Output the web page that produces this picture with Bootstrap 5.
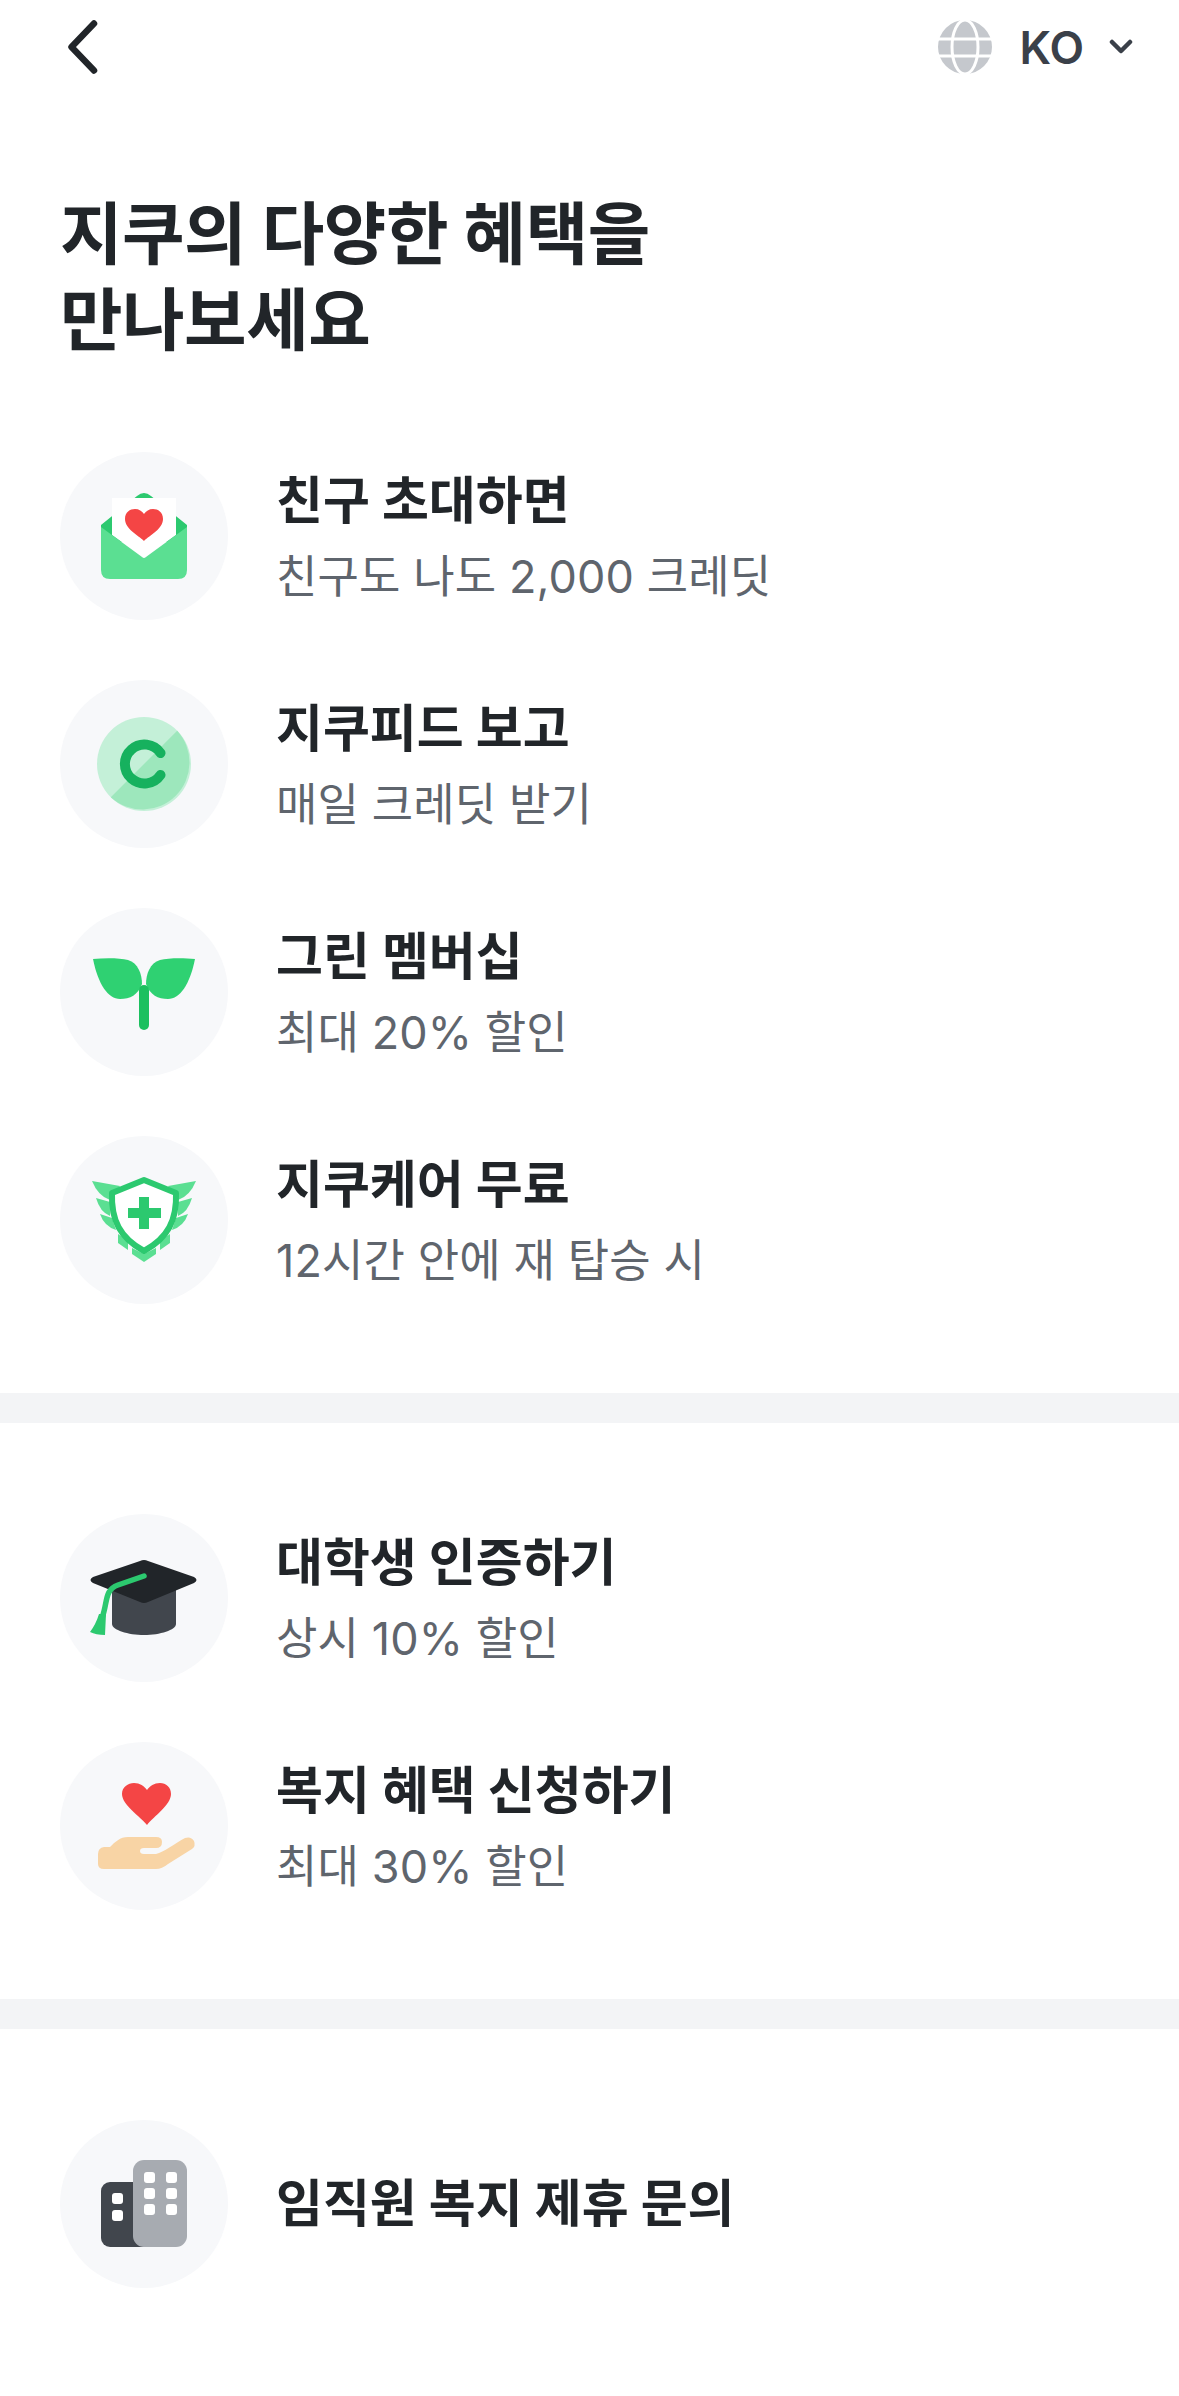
<!DOCTYPE html>
<html lang="ko">
<head>
<meta charset="utf-8">
<title>지쿠 혜택</title>
<link href="https://cdn.jsdelivr.net/npm/bootstrap@5.3.0/dist/css/bootstrap.min.css" rel="stylesheet">
<style>
body { font-family: Inter, "Noto Sans CJK KR", sans-serif; background: #fff; color: #212529; width: 1179px; height: 2396px; overflow: hidden; }
.top-bar { height: 94px; padding: 0 46px 0 67px; }
.back-ico { width: 32px; height: 54px; }
.globe-ico { width: 54px; height: 54px; margin-right: 27px; }
.lang-text { font-size: 45px; font-weight: 600; color: #3a4049; line-height: 1; letter-spacing: 0; }
.lang-caret { width: 24px; height: 16px; margin-left: 25px; }
.page-title { font-size: 68px; font-weight: 700; line-height: 86px; letter-spacing: -.5px; margin: 97px 0 0; padding: 0 60px 89px; }
.perk-list { display: flex; flex-direction: column; gap: 60px; padding: 0 60px 89px; }
.perk-list.next-list { padding-top: 91px; }
.perk-item { display: flex; align-items: center; gap: 48px; height: 168px; }
.perk-disc { width: 168px; height: 168px; flex: none; border-radius: 50%; background: #f7f8fa; }
.perk-disc svg { display: block; width: 168px; height: 168px; }
.perk-name { font-size: 51px; font-weight: 700; line-height: 72px; letter-spacing: 0; color: #212529; margin: 0; }
.perk-note { font-size: 45px; font-weight: 400; line-height: 60px; color: #5f656d; margin: 10px 0 0; letter-spacing: .1px; }
.band { height: 30px; background: #f3f4f6; }
</style>
</head>
<body>
<header class="top-bar d-flex align-items-center justify-content-between">
  <svg class="back-ico" viewBox="0 0 32 54" fill="none" stroke="#212529" stroke-width="6.5" stroke-linecap="round" stroke-linejoin="round"><path d="M27 3.500 L4.500 27 L27 50.500"/></svg>
  <div class="d-flex align-items-center">
    <svg class="globe-ico" viewBox="0 0 54 54"><circle cx="27" cy="27" r="27" fill="#c5c8cd"/><g fill="none" stroke="#fff" stroke-width="3"><ellipse cx="27" cy="27" rx="13" ry="27"/><path d="M0 19H54M0 36H54"/></g></svg>
    <span class="lang-text">KO</span>
    <svg class="lang-caret" viewBox="0 0 24 16" fill="none" stroke="#3a4049" stroke-width="4.5" stroke-linecap="round" stroke-linejoin="round"><path d="M3 3 L12 12 L21 3"/></svg>
  </div>
</header>
<h1 class="page-title">지쿠의 다양한 혜택을<br>만나보세요</h1>

<section class="perk-list">
  <div class="perk-item">
    <div class="perk-disc"><svg viewBox="0 0 168 168">
      <path d="M41 73 L77 44 Q84 38 91 44 L127 73 V90 H41Z" fill="#2cc96f"/>
      <path d="M52 46 H116 V83 L84 106 L52 83Z" fill="#fff"/>
      <path d="M84 89 C78 83 65 77 65 67 C65 60 70 57 75 57 C79 57 82 59 84 62 C86 59 89 57 93 57 C98 57 103 60 103 67 C103 77 90 83 84 89Z" fill="#f44545"/>
      <path d="M41 75 L82 105 Q84 107 86 105 L127 75 V118 Q127 127 118 127 H50 Q41 127 41 118Z" fill="#5bdf92"/>
    </svg></div>
    <div><p class="perk-name">친구 초대하면</p><p class="perk-note">친구도 나도 2,000 크레딧</p></div>
  </div>
  <div class="perk-item">
    <div class="perk-disc"><svg viewBox="0 0 168 168">
      <circle cx="84" cy="84" r="47" fill="#c4f0d8"/>
      <path d="M117.200 50.800 A47 47 0 0 1 50.800 117.200Z" fill="#9de7bc"/>
      <path d="M100.500 73 A19.500 19.500 0 1 0 100.500 95" fill="none" stroke="#16b15e" stroke-width="10" stroke-linecap="round"/>
    </svg></div>
    <div><p class="perk-name">지쿠피드 보고</p><p class="perk-note">매일 크레딧 받기</p></div>
  </div>
  <div class="perk-item">
    <div class="perk-disc"><svg viewBox="0 0 168 168">
      <path d="M33 51 C45 50 60 50 68 52 C78 55 82 66 82 76 C78 87 70 91 60 91 C48 91 38 76 33 51Z" fill="#2fd172"/>
      <path d="M135 51 C123 50 108 50 100 52 C90 55 86 66 86 76 C90 87 98 91 108 91 C120 91 130 76 135 51Z" fill="#2fd172"/>
      <rect x="79" y="77" width="10" height="45" rx="5" fill="#1cc05f"/>
    </svg></div>
    <div><p class="perk-name">그린 멤버십</p><p class="perk-note">최대 20% 할인</p></div>
  </div>
  <div class="perk-item">
    <div class="perk-disc"><svg viewBox="0 0 168 168">
      <g fill="#5bdf92">
        <path d="M32 45 L60 50 L50 64 Q38 60 32 45Z"/>
        <path d="M36 62 L50 66 L50 80 Q40 76 36 62Z"/>
        <path d="M40 78 L52 82 L56 94 Q44 90 40 78Z"/>
        <path d="M136 45 L108 50 L118 64 Q130 60 136 45Z"/>
        <path d="M132 62 L118 66 L118 80 Q128 76 132 62Z"/>
        <path d="M128 78 L116 82 L112 94 Q124 90 128 78Z"/>
        <path d="M58 98 L68 105 V114 L58 107Z"/>
        <path d="M110 98 L100 105 V114 L110 107Z"/>
        <path d="M72 112 L84 118 L96 112 V118 L84 126 L72 118Z"/>
      </g>
      <path d="M84 44 L116 57 C117 84 108 102 84 115 C60 102 51 84 52 57Z" fill="#fff" stroke="#2cc96f" stroke-width="6" stroke-linejoin="round"/>
      <path d="M79 61 H89 V72 H101 V82 H89 V93 H79 V82 H68 V72 H79Z" fill="#2cc96f"/>
    </svg></div>
    <div><p class="perk-name">지쿠케어 무료</p><p class="perk-note">12시간 안에 재 탑승 시</p></div>
  </div>
</section>
<div class="band"></div>

<section class="perk-list next-list">
  <div class="perk-item">
    <div class="perk-disc"><svg viewBox="0 0 168 168">
      <path d="M52 76 H116 L116 110 C116 116 100 121 84 121 C68 121 52 116 52 110Z" fill="#41464d"/>
      <path d="M80 47 Q84 45 88 47 L134 63 Q139 66 134 69 L88 88 Q84 90 80 88 L33 69 Q28 66 33 63Z" fill="#212529"/>
      <path d="M84 62 L58 71 C44 76 48 88 42 104" fill="none" stroke="#2cc96f" stroke-width="5.500" stroke-linecap="round"/>
      <path d="M39 100 L46 100 L45 121 Q36 121 30 118 Q36 110 39 100Z" fill="#2cc96f"/>
    </svg></div>
    <div><p class="perk-name">대학생 인증하기</p><p class="perk-note">상시 10% 할인</p></div>
  </div>
  <div class="perk-item">
    <div class="perk-disc"><svg viewBox="0 0 168 168">
      <path d="M87 83 C80 74 62 63 62 52 C62 45 68 41 74 41 C80 41 84 44 87 48 C90 44 94 41 100 41 C106 41 111 45 111 52 C111 63 94 74 87 83Z" fill="#f44545"/>
      <path d="M38 112 Q38 106 44 105 H50 C55 100 60 95 68 95 H96 Q102 95 102 100 Q102 106 96 106 H84 Q80 106 80 109 Q80 112 84 112 H96 C104 110 114 102 125 96 Q131 94 134 99 Q136 104 132 107 L108 122 Q102 127 96 127 H44 Q38 127 38 122Z" fill="#f8d4a5"/>
    </svg></div>
    <div><p class="perk-name">복지 혜택 신청하기</p><p class="perk-note">최대 30% 할인</p></div>
  </div>
</section>
<div class="band"></div>

<section class="perk-list next-list">
  <div class="perk-item">
    <div class="perk-disc"><svg viewBox="0 0 168 168">
      <rect x="41" y="62" width="50" height="65" rx="9" fill="#41464d"/>
      <rect x="73" y="40" width="54" height="87" rx="11" fill="#a7abb1"/>
      <g fill="#fff">
        <rect x="52" y="73" width="11" height="11" rx="3"/><rect x="52" y="90" width="11" height="11" rx="3"/>
        <rect x="84" y="52" width="11" height="11" rx="3"/><rect x="106" y="52" width="11" height="11" rx="3"/>
        <rect x="84" y="68" width="11" height="11" rx="3"/><rect x="106" y="68" width="11" height="11" rx="3"/>
        <rect x="84" y="84" width="11" height="11" rx="3"/><rect x="106" y="84" width="11" height="11" rx="3"/>
      </g>
    </svg></div>
    <div><p class="perk-name">임직원 복지 제휴 문의</p></div>
  </div>
</section>
<script src="https://cdn.jsdelivr.net/npm/bootstrap@5.3.0/dist/js/bootstrap.bundle.min.js"></script>
</body>
</html>
